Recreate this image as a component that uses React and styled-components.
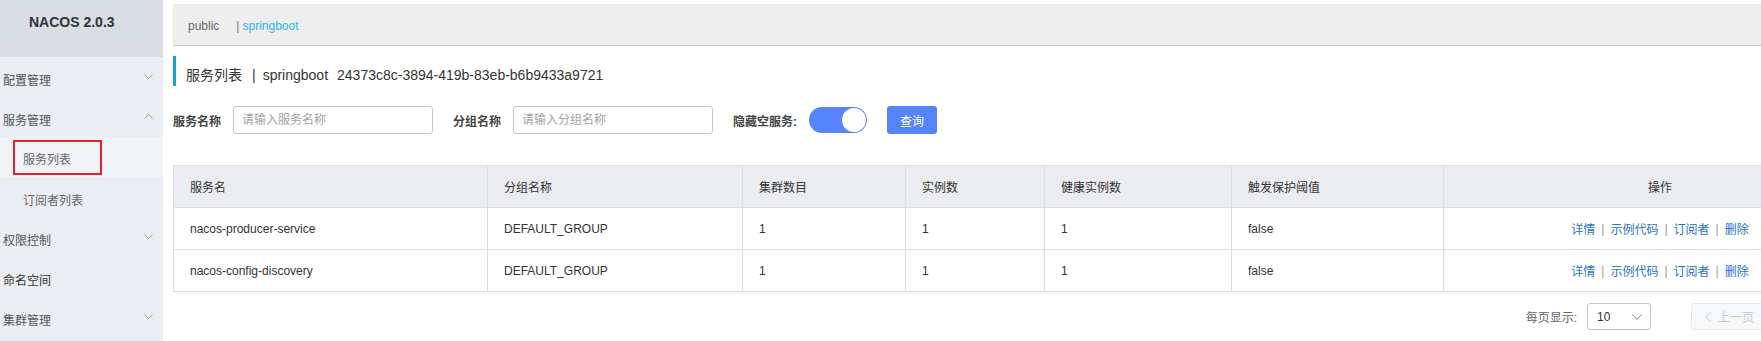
import React from 'react';
import styled, { createGlobalStyle } from 'styled-components';

const GlobalStyle = createGlobalStyle`
  html, body { margin: 0; padding: 0; overflow: hidden; background: #fff; }
  body {
    font-family: "Liberation Sans", "Noto Sans CJK SC", sans-serif;
    font-size: 12px;
    color: #333;
  }
  * { box-sizing: border-box; }
`;

const Page = styled.div`
  display: flex;
  width: 1887px;
  min-height: 100vh;
`;

const Sidebar = styled.aside`
  width: 163px;
  flex: none;
  background: #eaedf1;
`;

const Brand = styled.div`
  height: 57px;
  background: #d9dee4;
  padding: 13px 0 0 29px;
  line-height: 18px;
  font-size: 14px;
  font-weight: bold;
  color: #333;
`;

const MenuItem = styled.div`
  height: 40px;
  padding: 4px 10px 0 3px;
  display: flex;
  align-items: center;
  justify-content: space-between;
  font-size: 12px;
  color: ${(p) => (p.$leaf ? '#333' : '#555')};
`;

const SubItem = styled.div`
  height: 40px;
  display: flex;
  align-items: ${(p) => (p.$active ? 'flex-start' : 'center')};
  padding: ${(p) => (p.$active ? '3px 0 0 13px' : '4px 0 0 23px')};
  background: ${(p) => (p.$active ? '#f2f3f7' : 'transparent')};
  font-size: 12px;
  color: #666;
`;

const Highlight = styled.span`
  width: 89px;
  height: 35px;
  border: 2px solid #e8212b;
  display: inline-flex;
  align-items: center;
  padding: 2px 0 0 8px;
`;

const ChevronSvg = styled.svg`
  flex: none;
  margin-top: -5px;
`;

const Chevron = ({ up, color = '#a0a4ad', w = 9, h = 5 }) => (
  <ChevronSvg width={w} height={h} viewBox={`0 0 ${w} ${h}`}>
    <polyline
      points={up ? `0.5,${h - 0.5} ${w / 2},0.5 ${w - 0.5},${h - 0.5}` : `0.5,0.5 ${w / 2},${h - 0.5} ${w - 0.5},0.5`}
      fill="none"
      stroke={color}
      strokeWidth="1"
    />
  </ChevronSvg>
);

const Main = styled.main`
  flex: none;
  width: 1724px;
  padding: 4px 10px 0;
`;

const TopBar = styled.div`
  height: 42px;
  background: #eee;
  border-bottom: 1px solid #ccc;
  display: flex;
  align-items: center;
  padding: 2px 0 0 15px;
  font-size: 12px;
  color: #666;
`;

const NsSep = styled.span`
  color: #777;
  margin-left: 17px;
`;

const NsActive = styled.span`
  color: #2fb6e7;
  margin-left: 3px;
`;

const Title = styled.div`
  margin-top: 10px;
  height: 30px;
  border-left: 3px solid #1a9fd6;
  padding: 9px 0 0 10px;
  font-size: 14px;
  line-height: 20px;
  color: #333;
  display: flex;
`;

const TitleSep = styled.span`
  margin: 0 7px 0 10px;
`;

const TitleId = styled.span`
  margin-left: 9px;
`;

const FilterRow = styled.div`
  margin-top: 20px;
  display: flex;
  align-items: center;
  gap: 20px;
`;

const Field = styled.div`
  display: flex;
  align-items: center;
  gap: 12px;
`;

const Label = styled.label`
  font-size: 12px;
  font-weight: bold;
  color: #444;
`;

const Input = styled.input`
  width: 200px;
  height: 28px;
  border: 1px solid #c4c6cf;
  border-radius: 3px;
  padding: 0 8px;
  font-family: inherit;
  font-size: 12px;
  color: #333;
  outline: none;
  background: #fff;
  &::placeholder { color: #a3a3a3; }
`;

const Switch = styled.div`
  width: 58px;
  height: 26px;
  border-radius: 13px;
  background: #5584ff;
  display: flex;
  justify-content: flex-end;
  align-items: center;
  padding: 1px;
`;

const Knob = styled.span`
  width: 24px;
  height: 24px;
  border-radius: 50%;
  background: #fff;
`;

const Button = styled.button`
  width: 50px;
  height: 28px;
  border: none;
  border-radius: 3px;
  background: #5584ff;
  color: #fff;
  font-family: inherit;
  font-size: 12px;
  padding: 0;
`;

const Table = styled.div`
  margin-top: 31px;
  border: 1px solid #dcdee3;
  border-bottom: none;
`;

const Row = styled.div`
  display: grid;
  grid-template-columns: 314px 255px 163px 139px 187px 212px 1fr;
  height: 42px;
  border-bottom: 1px solid #dcdee3;
  background: ${(p) => (p.$head ? '#ebecf0' : '#fff')};
`;

const Cell = styled.div`
  display: flex;
  align-items: center;
  justify-content: ${(p) => (p.$center ? 'center' : 'flex-start')};
  padding: 0 16px;
  border-right: 1px solid #dcdee3;
  font-size: 12px;
  color: #333;
  white-space: nowrap;
  &:last-child { border-right: none; }
`;

const Link = styled.a`
  color: #2a72c8;
  text-decoration: none;
`;

const LinkSep = styled.span`
  color: #999;
  margin: 0 6px;
`;

const Pager = styled.div`
  margin-top: 11px;
  display: flex;
  justify-content: flex-end;
  align-items: center;
  padding-right: 108px;
`;

const PagerLabel = styled.span`
  color: #666;
  font-size: 12px;
  margin-right: 10px;
`;

const Select = styled.div`
  width: 64px;
  height: 27px;
  border: 1px solid #c4c6cf;
  border-radius: 3px;
  display: flex;
  align-items: center;
  justify-content: space-between;
  padding: 0 8px 0 9px;
  color: #333;
  font-size: 12px;
  svg { margin-top: 0; }
`;

const PrevBtn = styled.div`
  height: 27px;
  width: 78px;
  margin-left: 40px;
  border: 1px solid #e6e7eb;
  border-radius: 3px;
  background: #f7f8fa;
  color: #c4c6cf;
  display: flex;
  align-items: center;
  gap: 7px;
  padding-left: 13px;
  font-size: 12px;
`;

const LeftArrow = ({ color }) => (
  <svg width="6" height="10" viewBox="0 0 6 10">
    <polyline points="5.5,0.5 0.8,5 5.5,9.5" fill="none" stroke={color} strokeWidth="1" />
  </svg>
);

const rows = [
  { name: 'nacos-producer-service', group: 'DEFAULT_GROUP', clusters: 1, instances: 1, healthy: 1, threshold: 'false' },
  { name: 'nacos-config-discovery', group: 'DEFAULT_GROUP', clusters: 1, instances: 1, healthy: 1, threshold: 'false' },
];

const headers = ['服务名', '分组名称', '集群数目', '实例数', '健康实例数', '触发保护阈值'];

export default function App() {
  return (
    <>
      <GlobalStyle />
      <Page>
        <Sidebar>
          <Brand>NACOS 2.0.3</Brand>
          <MenuItem>配置管理<Chevron /></MenuItem>
          <MenuItem>服务管理<Chevron up /></MenuItem>
          <SubItem $active><Highlight>服务列表</Highlight></SubItem>
          <SubItem>订阅者列表</SubItem>
          <MenuItem>权限控制<Chevron /></MenuItem>
          <MenuItem $leaf>命名空间</MenuItem>
          <MenuItem>集群管理<Chevron /></MenuItem>
        </Sidebar>
        <Main>
          <TopBar>
            <span>public</span>
            <NsSep>|</NsSep>
            <NsActive>springboot</NsActive>
          </TopBar>
          <Title>
            <span>服务列表</span>
            <TitleSep>|</TitleSep>
            <span>springboot</span>
            <TitleId>24373c8c-3894-419b-83eb-b6b9433a9721</TitleId>
          </Title>
          <FilterRow>
            <Field>
              <Label>服务名称</Label>
              <Input placeholder="请输入服务名称" />
            </Field>
            <Field>
              <Label>分组名称</Label>
              <Input placeholder="请输入分组名称" />
            </Field>
            <Field>
              <Label>隐藏空服务:</Label>
              <Switch><Knob /></Switch>
            </Field>
            <Button>查询</Button>
          </FilterRow>
          <Table>
            <Row $head>
              {headers.map((h) => <Cell key={h}>{h}</Cell>)}
              <Cell $center>操作</Cell>
            </Row>
            {rows.map((r) => (
              <Row key={r.name}>
                <Cell>{r.name}</Cell>
                <Cell>{r.group}</Cell>
                <Cell>{r.clusters}</Cell>
                <Cell>{r.instances}</Cell>
                <Cell>{r.healthy}</Cell>
                <Cell>{r.threshold}</Cell>
                <Cell $center>
                  <Link>详情</Link><LinkSep>|</LinkSep>
                  <Link>示例代码</Link><LinkSep>|</LinkSep>
                  <Link>订阅者</Link><LinkSep>|</LinkSep>
                  <Link>删除</Link>
                </Cell>
              </Row>
            ))}
          </Table>
          <Pager>
            <PagerLabel>每页显示:</PagerLabel>
            <Select>
              <span>10</span>
              <Chevron color="#888" w={10} h={6} />
            </Select>
            <PrevBtn>
              <LeftArrow color="#c4c6cf" />
              <span>上一页</span>
            </PrevBtn>
          </Pager>
        </Main>
      </Page>
    </>
  );
}
